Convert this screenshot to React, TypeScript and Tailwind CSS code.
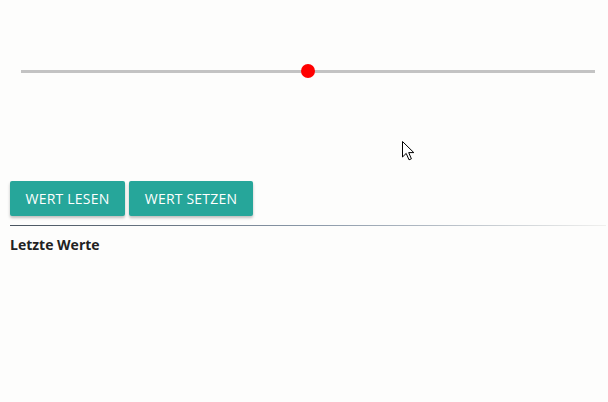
import React from "react";

export default function App() {
  return (
    <div
      className="w-[608px] h-[402px] bg-[#fdfdfc] overflow-hidden relative"
      style={{ fontFamily: '"Open Sans", "Noto Sans", sans-serif' }}
    >
      <div className="pt-[64px] pl-[21px] pr-[13px]">
        <div className="relative h-[14px] flex items-center">
          <div className="w-full h-[3px] bg-[#c3c3c3]" />
          <div className="absolute left-[280px] top-0 w-[14px] h-[14px] rounded-full bg-[#ff0000]" />
        </div>
      </div>
      <div className="mt-[103px] px-[10px] flex gap-[4px]">
        <button className="h-[35px] w-[115px] rounded-[2px] bg-[#26a69a] text-white text-[14px] shadow-[0_2px_3px_rgba(0,0,0,0.25)] tracking-[0.2px]">
          WERT LESEN
        </button>
        <button className="h-[35px] w-[124px] rounded-[2px] bg-[#26a69a] text-white text-[14px] shadow-[0_2px_3px_rgba(0,0,0,0.25)] tracking-[0.2px]">
          WERT SETZEN
        </button>
      </div>
      <div className="ml-[10px] mr-[2px] mt-[9px] h-[1px] bg-gradient-to-r from-[#4a5560] via-[#8a98a8] to-[#f0f0ee]" />
      <div className="px-[10px] pt-[8px] text-[14px] font-bold text-[#222]">Letzte Werte</div>
      <svg
        className="absolute left-[402px] top-[141px]"
        width="16"
        height="22"
        viewBox="0 0 16 22"
      >
        <path
          d="M0.5 0.5 L0.5 16 L4.2 12.4 L7 18.8 L9.4 17.8 L6.7 11.6 L11.8 11.6 Z"
          fill="white"
          stroke="black"
          strokeWidth="1"
          strokeLinejoin="round"
        />
      </svg>
    </div>
  );
}
